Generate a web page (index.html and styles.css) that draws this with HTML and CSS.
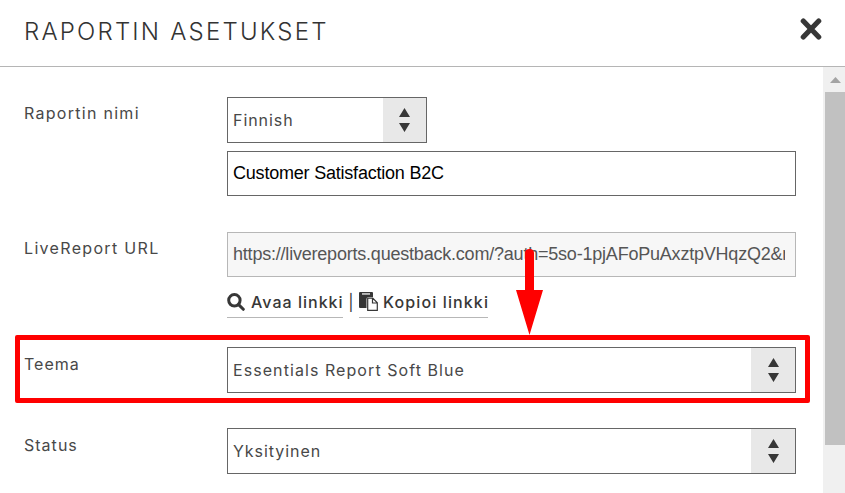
FILE: index.html
```html
<!DOCTYPE html>
<html lang="fi">
<head>
<meta charset="utf-8">
<title>Raportin asetukset</title>
<link rel="stylesheet" href="styles.css">
</head>
<body>
<div class="dialog">
  <header class="header">
    <h1 class="title">RAPORTIN ASETUKSET</h1>
    <svg class="close" viewBox="0 0 22 24"><path d="M3.3 4 18.7 20M18.7 4 3.3 20"/></svg>
  </header>
  <div class="body">
    <main class="form">
      <div class="row row-name">
        <div class="label"><span class="t-name">Raportin nimi</span></div>
        <div class="fields">
          <div class="select select-short"><span class="value t-lang">Finnish</span><span class="stepper"><svg viewBox="0 0 11 24"><path d="M5.5 0 11 9H0zM0 15h11l-5.5 9z"/></svg></span></div>
          <div class="input">Customer Satisfaction B2C</div>
        </div>
      </div>
      <div class="row row-url">
        <div class="label"><span class="t-url">LiveReport URL</span></div>
        <div class="fields">
          <div class="input input-readonly"><span class="clip">https://livereports.questback.com/?auth=5so-1pjAFoPuAxztpVHqzQ2&amp;r</span></div>
          <div class="links">
            <a class="link link-open"><svg class="search" viewBox="0 0 18 18"><circle cx="7.4" cy="7.3" r="5.7"/><path d="m11.6 11.6 4.7 4.7"/></svg><span class="t-open">Avaa linkki</span></a>
            <span class="divider">|</span>
            <a class="link link-copy"><svg class="copy" viewBox="0 0 19 19"><path class="board" d="M1 0h12q1 0 1 1v4H9.5Q7.5 5 7.5 7v9H1q-1 0-1-1V1q0-1 1-1z"/><path class="clasp" d="M3 1.2h8v1.500H3z"/><path class="sheet" d="M8.7 6.2h5l4.600 4.600v7.500H8.7zM13.500 6.2V11h4.800"/></svg><span class="t-copy">Kopioi linkki</span></a>
          </div>
        </div>
      </div>
      <div class="row row-theme">
        <div class="label"><span class="t-theme">Teema</span></div>
        <div class="fields">
          <div class="select"><span class="value t-blue">Essentials Report Soft Blue</span><span class="stepper"><svg viewBox="0 0 11 24"><path d="M5.5 0 11 9H0zM0 15h11l-5.5 9z"/></svg></span></div>
        </div>
        <div class="highlight"></div>
        <svg class="arrow" viewBox="0 0 28 86"><path d="M9 4q0-4 4.500-4t4.500 4v37h9L13.500 86 0 41h9z"/></svg>
      </div>
      <div class="row row-status">
        <div class="label"><span class="t-status">Status</span></div>
        <div class="fields">
          <div class="select"><span class="value t-private">Yksityinen</span><span class="stepper"><svg viewBox="0 0 11 24"><path d="M5.5 0 11 9H0zM0 15h11l-5.500 9z"/></svg></span></div>
        </div>
      </div>
    </main>
    <div class="scrollbar"><svg class="up" viewBox="0 0 11 6"><path d="M5.500 0 11 6H0z"/></svg><div class="thumb"></div></div>
  </div>
</div>
</body>
</html>
```

FILE: styles.css
```css
* { box-sizing: border-box; }
body { margin: 0; background: #fff; overflow: hidden; font: 16px/20px Inter, "Liberation Sans", sans-serif; color: #484848; }
svg { display: block; flex: none; }
.dialog { width: 845px; height: 493px; display: flex; flex-direction: column; }
.header { height: 67px; flex: none; padding: 0 23px 3px 24px; border-bottom: 1px solid #b5b5b5; display: flex; align-items: center; justify-content: space-between; }
.title { margin: 0; font-size: 24px; line-height: 30px; font-weight: 350; letter-spacing: 2.2px; color: #333; white-space: nowrap; }
.close { width: 22px; height: 24px; margin-top: -5px; fill: none; stroke: #373737; stroke-width: 5.2; stroke-linecap: round; }
.body { flex: 1; min-height: 0; display: flex; justify-content: space-between; }
.form { width: 796px; padding-top: 30px; display: flex; flex-direction: column; gap: 35px; }
.row { position: relative; display: flex; flex: none; }
.row-name { height: 100px; }
.row-url { height: 80px; }
.label { width: 227px; flex: none; padding: 6px 0 0 24px; white-space: nowrap; }
.row-theme .label, .row-status .label { padding-top: 7px; }
.fields { flex: 1; min-width: 0; display: flex; flex-direction: column; gap: 8px; }
.select { height: 46px; flex: none; border: 1px solid #666; display: flex; align-items: center; justify-content: space-between; padding-left: 5px; background: #fff; }
.select-short { width: 200px; }
.value { white-space: nowrap; }
.stepper { width: 44px; height: 44px; background: #e8e8e8; display: flex; align-items: center; justify-content: center; }
.stepper svg { width: 11px; height: 24px; fill: #373737; }
.select-short .stepper { width: 43px; }
.input { height: 45px; flex: none; border: 1px solid #666; padding: 0 10px 2px 5px; display: flex; align-items: center; font-family: "Liberation Sans", sans-serif; font-size: 18px; letter-spacing: -.21px; color: #000; white-space: nowrap; }
.input-readonly { border-color: #b7b7b7; background: #f7f7f7; color: #555; }
.clip { overflow: hidden; }
.row-url .fields { gap: 12px; }
.links { display: flex; gap: 5px; line-height: 20px; color: #373737; }
.link { height: 29px; display: flex; align-items: flex-start; white-space: nowrap; font-weight: 500; padding-top: 3px; border-bottom: 1px solid #b7b7b7; }
.link-open { width: 116px; gap: 6px; }
.link-copy { width: 129px; gap: 5px; }
.divider { padding-top: 3px; width: 6px; text-align: center; }
.search { width: 18px; height: 18px; margin-top: 1px; fill: none; stroke: #373737; stroke-width: 3; stroke-linecap: round; }
.copy { width: 19px; height: 19px; }
.board { fill: #373737; }
.clasp { fill: #ddd; }
.sheet { fill: #fff; stroke: #373737; stroke-width: 1.2; }
.highlight { position: absolute; left: 15px; top: -12px; width: 795px; height: 68px; border: 5px solid #f00; border-radius: 2px; }
.arrow { position: absolute; left: 516px; top: -98px; width: 28px; height: 86px; fill: #f00; }
.scrollbar { width: 22px; background: #f0f0f0; padding: 10px 0 0 2px; }
.up { width: 11px; height: 6px; margin-left: 5px; fill: #a3a3a3; }
.thumb { margin-top: 9px; height: 353px; background: #c1c1c1; }
.t-name { letter-spacing: 1.28px; }
.t-url { letter-spacing: 1.33px; }
.t-lang, .t-private { letter-spacing: .95px; }
.t-theme, .t-status, .t-open { letter-spacing: 1.02px; }
.t-blue { letter-spacing: 1.07px; }
.t-copy { letter-spacing: 1.12px; }
```
